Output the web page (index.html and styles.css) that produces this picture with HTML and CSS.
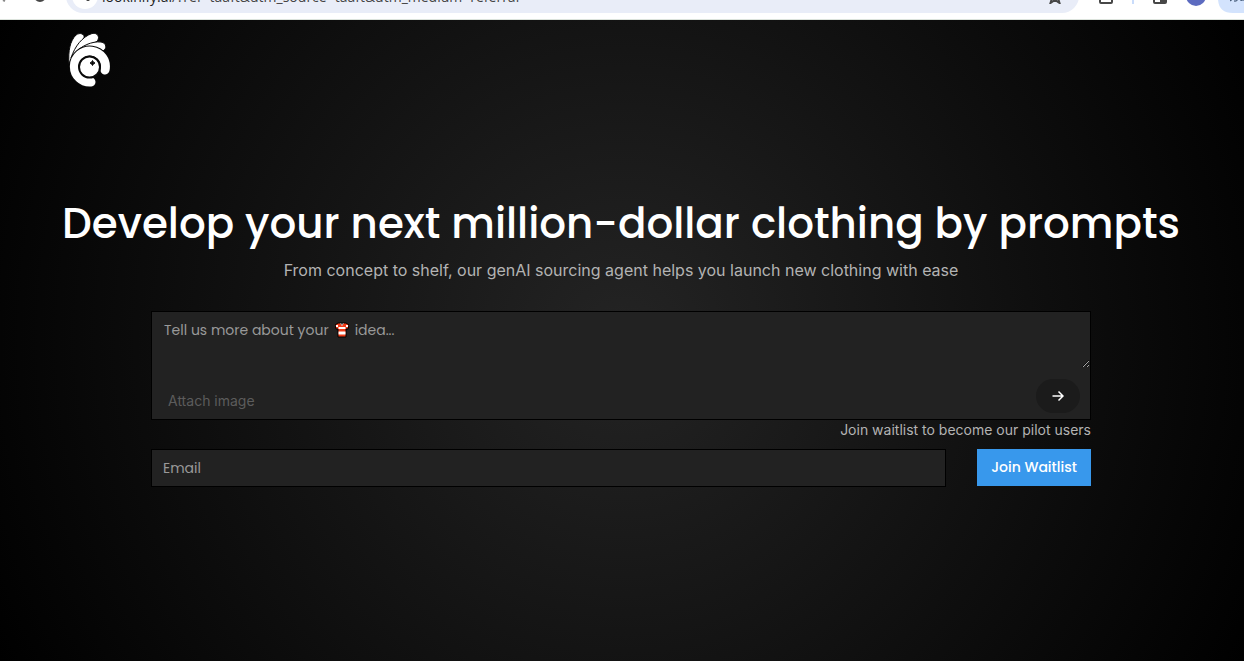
FILE: index.html
```html
<!DOCTYPE html>
<html lang="en">
<head>
    <meta charset="UTF-8">
    <meta name="viewport" content="width=device-width, initial-scale=1.0">
    <title>Develop your next million-dollar clothing by prompts</title>
    <link rel="stylesheet" href="styles.css">
</head>
<body>
    <div class="toolbar">
        <svg class="nav-icons" viewBox="0 0 60 20" aria-hidden="true">
            <path d="M3 0l2 1" stroke="#888" stroke-width="2"/>
            <circle cx="40" cy="-4" r="5" fill="none" stroke="#474747" stroke-width="2"/>
        </svg>
        <div class="address">
            <span class="site-info"><svg viewBox="0 0 26 26" aria-hidden="true"><circle cx="16" cy="16" r="2" fill="#333"/></svg></span>
            <span class="url"><b>lookinify.ai</b>/?ref=taaft&amp;utm_source=taaft&amp;utm_medium=referral</span>
            <svg class="star" viewBox="0 0 16 16" aria-hidden="true"><path d="M8 1l2 5h5l-4 4 1.500 5L8 12l-4.500 3L5 10 1 6h5z" fill="none" stroke="#474747" stroke-width="2"/></svg>
        </div>
        <svg class="browser-icons" viewBox="0 0 165 20" aria-hidden="true">
            <rect x="21" y="-8" width="12" height="11" rx="1" fill="none" stroke="#474747" stroke-width="2"/>
            <path d="M54 0v4" stroke="#c9dcfb" stroke-width="2"/>
            <rect x="75" y="-8" width="12" height="11" rx="1" fill="none" stroke="#474747" stroke-width="2"/>
            <path d="M81 0h6v3h-6z" fill="#474747"/>
            <circle cx="117" cy="-4" r="10" fill="#5c6bc0"/>
            <path d="M139-8h40v21h-25q-15 0-15-15z" fill="#d3e3fd"/>
            <path d="M151 1l3-2m1 2q3 1 4-2m3-1v3m0-1h3" fill="none" stroke="#28405f"/>
        </svg>
    </div>

    <div class="page">
        <header class="header">
            <a href="#" class="logo" aria-label="Home">
                <svg viewBox="0 0 42 54">
                    <g fill="#fff" stroke="#0a0a0a">
                        <path d="M1 31C0 18 2 8 8 2 12-1 17 1 16 5 10 11 6 19 1 31z"/>
                        <path d="M3 25C7 13 14 4 24 .5c6-1.500 9 5 4 8.500C18 12 9 16 3 25z"/>
                        <path d="M7 20c6-7 17-12 26-11 6 1 6 7 2 9-9-3-17-3-28 2z"/>
                    </g>
                    <path d="M37 37A15.500 15.500 0 1 0 23 49" fill="none" stroke="#0a0a0a" stroke-width="11" stroke-linecap="round"/>
                    <path d="M37 37A15.500 15.500 0 1 0 23 49" fill="none" stroke="#fff" stroke-width="9" stroke-linecap="round"/>
                    <circle cx="21.500" cy="34" r="10.500" fill="#fff" stroke="#0a0a0a" stroke-width="2"/>
                    <path d="M24.500 27.500q.5 2 2.500 2.500-2 .5-2.500 2.500-.5-2-2.500-2.500 2-.5 2.500-2.500z" fill="#0a0a0a" stroke="#0a0a0a"/>
                </svg>
            </a>
        </header>

        <main class="hero">
            <h1>Develop your next million-dollar clothing by prompts</h1>
            <p class="subtitle">From concept to shelf, our genAI sourcing agent helps you launch new clothing with ease</p>

            <form class="form">
                <div class="prompt-box">
                    <div class="prompt-field">
                        <textarea id="idea" placeholder=" "></textarea>
                        <label for="idea" class="hint">
                            <span>Tell us more about your</span>
                            <svg viewBox="0 0 14 16" role="img" aria-label="shirt">
                                <path d="M3 1h8l3 2-1 4h-2v8H3V7H1L0 3z" fill="#f03a17" stroke="#000"/>
                                <path d="M3.500 5h7v2h-7zM3.500 9.500h7v3h-7zM1 3h2v2H1zM11 3h2v2h-2zM5 1h4L7 4z" fill="#fff"/>
                                <path d="M5 1l2 2 2-2z" fill="#444"/>
                            </svg>
                            <span>idea...</span>
                        </label>
                    </div>
                    <div class="prompt-actions">
                        <button type="button" class="attach">Attach image</button>
                        <button type="submit" class="send" aria-label="Send">
                            <svg viewBox="0 0 12 12"><path d="M0.500 6h11M6.500 1.500L11 6l-4.500 4.500" fill="none" stroke="#fff" stroke-width="1.500"/></svg>
                        </button>
                    </div>
                </div>
                <p class="note">Join waitlist to become our pilot users</p>
                <div class="waitlist">
                    <input type="email" placeholder="Email" aria-label="Email">
                    <button type="submit" class="join">Join Waitlist</button>
                </div>
            </form>
        </main>
    </div>
</body>
</html>
```

FILE: styles.css
```css
* {
    margin: 0;
    padding: 0;
    box-sizing: border-box;
}

body {
    display: flex;
    flex-direction: column;
    min-height: 100vh;
    background: #000;
    font-family: Inter, sans-serif;
    color: #b3b3b3;
}

button,
input,
textarea {
    border: none;
    border-radius: 0;
    font-family: Poppins, Inter, sans-serif;
    font-size: 14px;
}

button {
    cursor: pointer;
}

/* browser bar */
.toolbar {
    display: flex;
    height: 20px;
    overflow: hidden;
    background: #fff;
    border-bottom: 1px solid #dce3dc;
}

.nav-icons {
    width: 60px;
    height: 20px;
}

.address {
    display: flex;
    flex: 1;
    align-items: center;
    align-self: flex-end;
    height: 34px;
    margin: 0 0 6px 6px;
    padding: 0 16px 0 6px;
    border-radius: 17px;
    background: #e9edf8;
}

.site-info {
    width: 26px;
    height: 26px;
    margin-right: 4px;
    border-radius: 50%;
    background: #fff;
}

.site-info svg {
    display: block;
}

.url {
    flex: 1;
    padding-top: 2px;
    font: 14px/18px "Open Sans", sans-serif;
    color: #444;
    white-space: nowrap;
}

.url b {
    font-weight: 400;
    color: #1f1f1f;
}

.star {
    width: 16px;
    height: 16px;
}

.browser-icons {
    width: 165px;
    height: 20px;
}

/* page */
.page {
    flex: 1;
    background: radial-gradient(circle, #242424 0%, #000 100%);
}

.header {
    padding: 13px 68px;
}

.logo {
    display: block;
    width: 42px;
}

.logo svg {
    display: block;
    width: 42px;
    height: 54px;
}

.hero {
    padding: 92px 26px 0 24px;
    text-align: center;
}

h1 {
    font: 500 42px/64px Poppins, Inter, sans-serif;
    color: #fff;
}

.subtitle {
    margin-top: 1px;
    font-size: 16px;
    line-height: 26px;
}

.form {
    max-width: 940px;
    margin: 28px auto 0;
}

.prompt-box {
    background: #222;
    border: 1px solid #000;
}

.prompt-field {
    position: relative;
}

textarea {
    display: block;
    width: 100%;
    height: 56px;
    padding: 8px 12px;
    background: transparent;
    color: #fff;
    resize: vertical;
    outline: none;
}

/* sits over the empty textarea in place of its placeholder */
.hint {
    position: absolute;
    top: 8px;
    left: 12px;
    display: flex;
    align-items: center;
    gap: 6px;
    font: 14px/20px Poppins, Inter, sans-serif;
    color: #999;
    pointer-events: none;
}

.hint svg {
    width: 14px;
    height: 16px;
}

textarea:not(:placeholder-shown) + .hint {
    display: none;
}

.prompt-actions {
    display: flex;
    justify-content: space-between;
    align-items: center;
    padding: 11px 10px 6px 16px;
}

.attach {
    padding-top: 8px;
    background: transparent;
    font-family: Inter, sans-serif;
    color: #5c5c5c;
}

.send {
    display: flex;
    justify-content: center;
    align-items: center;
    width: 44px;
    height: 34px;
    border-radius: 17px;
    background: #1b1b1b;
}

.send svg {
    width: 12px;
    height: 12px;
}

.note {
    font-size: 14px;
    line-height: 20px;
    text-align: right;
}

.waitlist {
    display: flex;
    gap: 31px;
    margin-top: 9px;
}

input {
    flex: 1;
    height: 38px;
    padding: 0 11px;
    background: #222;
    border: 1px solid #000;
    color: #fff;
}

input::placeholder {
    color: #999;
}

.join {
    width: 114px;
    height: 37px;
    background: #3898ec;
    font-weight: 500;
    color: #fff;
}
```
